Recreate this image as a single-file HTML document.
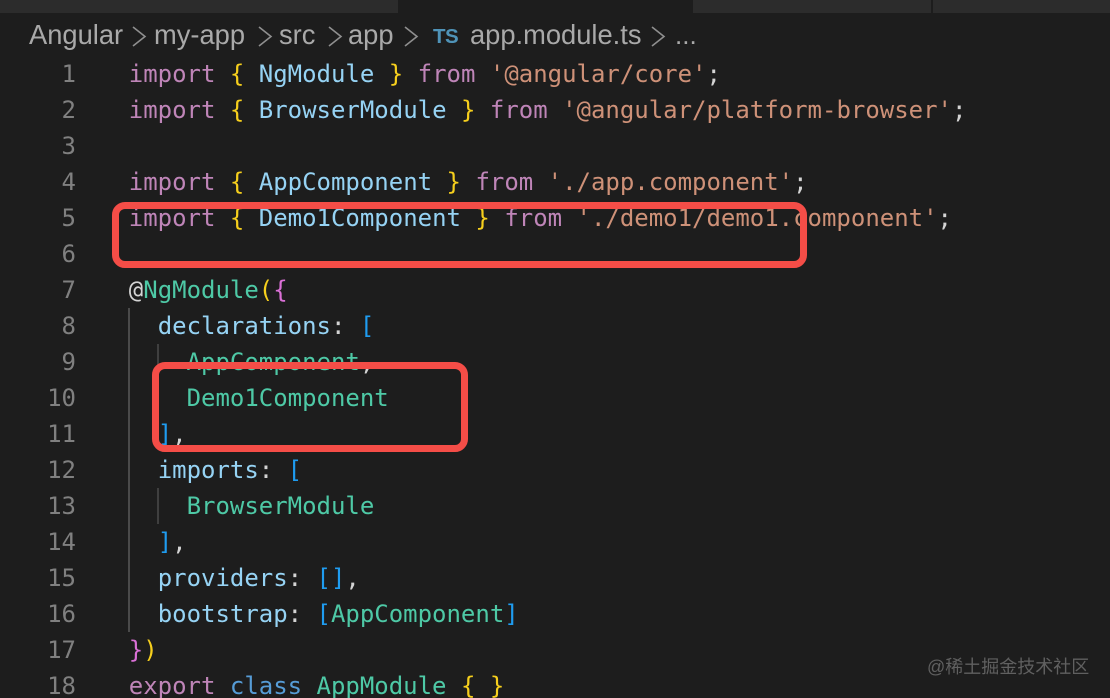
<!DOCTYPE html>
<html><head><meta charset="utf-8">
<style>
html,body{margin:0;padding:0;background:#1d1d1d}
#r{position:relative;width:1110px;height:698px;overflow:hidden;background:#1d1d1d}
.tab{position:absolute;top:0;height:12.5px;background:#2c2c2c}
.b{position:absolute;top:19px;height:32px;font:27.3px/32px "Liberation Sans",sans-serif;color:#a9a9a9;white-space:pre}
.l{position:absolute;left:128.8px;height:36px;line-height:36px;font-family:"DejaVu Sans Mono","Liberation Mono",monospace;font-size:24px;letter-spacing:-.01px;white-space:pre;color:#d4d4d4}
.n{position:absolute;left:20px;width:56px;text-align:right;height:36px;line-height:36px;font-family:"DejaVu Sans Mono","Liberation Mono",monospace;font-size:24px;color:#808080}
.k{color:#bf85b8}.y{color:#f6cf1d}.v{color:#96d3f4}.s{color:#ce9178}.t{color:#4ec9a6}.p{color:#da70d6}.u{color:#1f9cf0}.c{color:#569cd6}
.g{position:absolute;width:2px;background:#4a4a4a}
.box{position:absolute;box-sizing:border-box;border:7px solid #f44d47;border-radius:13px}
#w{position:absolute;left:927px;top:654px;font:18px/26px "Liberation Sans","Noto Sans CJK SC",sans-serif;color:#606060;white-space:pre}
</style></head><body><div id="r">
<div class="tab" style="left:0;width:398px"></div>
<div class="tab" style="left:693px;width:238px"></div>
<div class="tab" style="left:933px;width:177px"></div>

<div class="b" style="left:29px">Angular</div>
<div class="b" style="left:154px">my-app</div>
<div class="b" style="left:279px">src</div>
<div class="b" style="left:348px">app</div>
<div class="b" style="left:470px">app.module.ts</div>
<div class="b" style="left:675px;font-size:26px">...</div>
<div class="b" style="left:433px;top:24px;font-size:20.5px;line-height:26px;font-weight:bold;color:#4f93b8;letter-spacing:-.5px">TS</div>
<svg style="position:absolute;left:0;top:0" width="700" height="50" fill="none" stroke="#8f8f8f" stroke-width="1.6">
<path d="M133 27l12 9.500-12 9.500M259 27l12 9.500-12 9.500M329 27l12 9.500-12 9.500M405 27l12 9.500-12 9.500M652 27l12 9.500-12 9.500"/>
</svg>

<div class="g" style="left:128px;top:308px;height:324px"></div>
<div class="g" style="left:157px;top:344px;height:72px;background:#3f3f3f"></div>
<div class="g" style="left:157px;top:488px;height:36px;background:#3f3f3f"></div>

<div class="n" style="top:56px">1</div>
<div class="n" style="top:92px">2</div>
<div class="n" style="top:128px">3</div>
<div class="n" style="top:164px">4</div>
<div class="n" style="top:200px">5</div>
<div class="n" style="top:236px">6</div>
<div class="n" style="top:272px">7</div>
<div class="n" style="top:308px">8</div>
<div class="n" style="top:344px">9</div>
<div class="n" style="top:380px">10</div>
<div class="n" style="top:416px">11</div>
<div class="n" style="top:452px">12</div>
<div class="n" style="top:488px">13</div>
<div class="n" style="top:524px">14</div>
<div class="n" style="top:560px">15</div>
<div class="n" style="top:596px">16</div>
<div class="n" style="top:632px">17</div>
<div class="n" style="top:668px">18</div>

<div class="l" style="top:56px"><span class="k">import</span> <span class="y">{</span> <span class="v">NgModule</span> <span class="y">}</span> <span class="k">from</span> <span class="s">'@angular/core'</span>;</div>
<div class="l" style="top:92px"><span class="k">import</span> <span class="y">{</span> <span class="v">BrowserModule</span> <span class="y">}</span> <span class="k">from</span> <span class="s">'@angular/platform-browser'</span>;</div>
<div class="l" style="top:164px"><span class="k">import</span> <span class="y">{</span> <span class="v">AppComponent</span> <span class="y">}</span> <span class="k">from</span> <span class="s">'./app.component'</span>;</div>
<div class="l" style="top:200px"><span class="k">import</span> <span class="y">{</span> <span class="v">Demo1Component</span> <span class="y">}</span> <span class="k">from</span> <span class="s">'./demo1/demo1.component'</span>;</div>
<div class="l" style="top:272px">@<span class="t">NgModule</span><span class="y">(</span><span class="p">{</span></div>
<div class="l" style="top:308px">  <span class="v">declarations</span>: <span class="u">[</span></div>
<div class="l" style="top:344px">    <span class="t">AppComponent</span>,</div>
<div class="l" style="top:380px">    <span class="t">Demo1Component</span></div>
<div class="l" style="top:416px">  <span class="u">]</span>,</div>
<div class="l" style="top:452px">  <span class="v">imports</span>: <span class="u">[</span></div>
<div class="l" style="top:488px">    <span class="t">BrowserModule</span></div>
<div class="l" style="top:524px">  <span class="u">]</span>,</div>
<div class="l" style="top:560px">  <span class="v">providers</span>: <span class="u">[]</span>,</div>
<div class="l" style="top:596px">  <span class="v">bootstrap</span>: <span class="u">[</span><span class="t">AppComponent</span><span class="u">]</span></div>
<div class="l" style="top:632px"><span class="p">}</span><span class="y">)</span></div>
<div class="l" style="top:668px"><span class="k">export</span> <span class="c">class</span> <span class="t">AppModule</span> <span class="y">{ }</span></div>

<div class="box" style="left:112px;top:202px;width:695px;height:66px"></div>
<div class="box" style="left:152px;top:362px;width:316px;height:90px"></div>

<div id="w">@稀土掘金技术社区</div>
</div></body></html>
